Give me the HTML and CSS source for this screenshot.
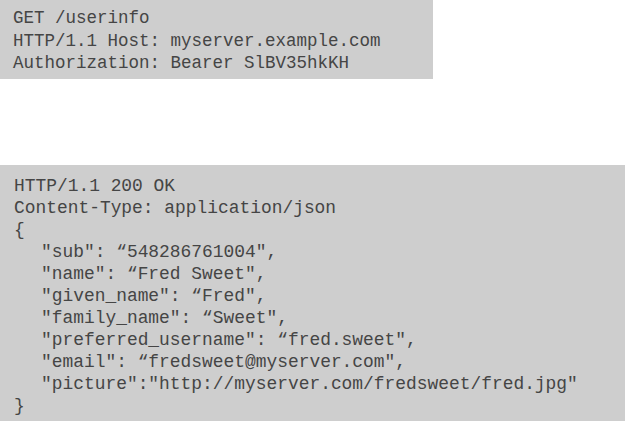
FILE: index.html
```html
<!DOCTYPE html>
<html>
<head>
<meta charset="utf-8">
<link rel="stylesheet" href="styles.css">
</head>
<body>
<div class="page">
  <div class="code request">
    <div class="line">GET /userinfo</div>
    <div class="line">HTTP/1.1 Host: myserver.example.com</div>
    <div class="line">Authorization: Bearer SlBV35hkKH</div>
  </div>
  <div class="code response">
    <div class="line">HTTP/1.1 200 OK</div>
    <div class="line">Content-Type: application/json</div>
    <div class="line">{</div>
    <div class="line in">"sub": “548286761004",</div>
    <div class="line in">"name": “Fred Sweet",</div>
    <div class="line in">"given_name": “Fred",</div>
    <div class="line in">"family_name": “Sweet",</div>
    <div class="line in">"preferred_username": “fred.sweet",</div>
    <div class="line in">"email": “fredsweet@myserver.com",</div>
    <div class="line in">"picture":"http://myserver.com/fredsweet/fred.jpg"</div>
    <div class="line">}</div>
  </div>
</div>
</body>
</html>
```
FILE: styles.css
```css
html, body {
  margin: 0;
  padding: 0;
  background: #ffffff;
}
.page {
  display: flex;
  flex-direction: column;
  align-items: flex-start;
  gap: 86px;
  width: 625px;
}
.code {
  background: #cecece;
  color: #454545;
  font-family: "Liberation Mono", "Courier New", monospace;
  box-sizing: border-box;
}
.line {
  white-space: pre;
}
.request {
  width: 433px;
  height: 79px;
  padding: 7px 0 0 13px;
  font-size: 17.5px;
  line-height: 22.5px;
}
.response {
  width: 625px;
  height: 256px;
  padding: 10px 0 0 14px;
  font-size: 17.9px;
  line-height: 22px;
}
.in {
  padding-left: 27px;
}
```
